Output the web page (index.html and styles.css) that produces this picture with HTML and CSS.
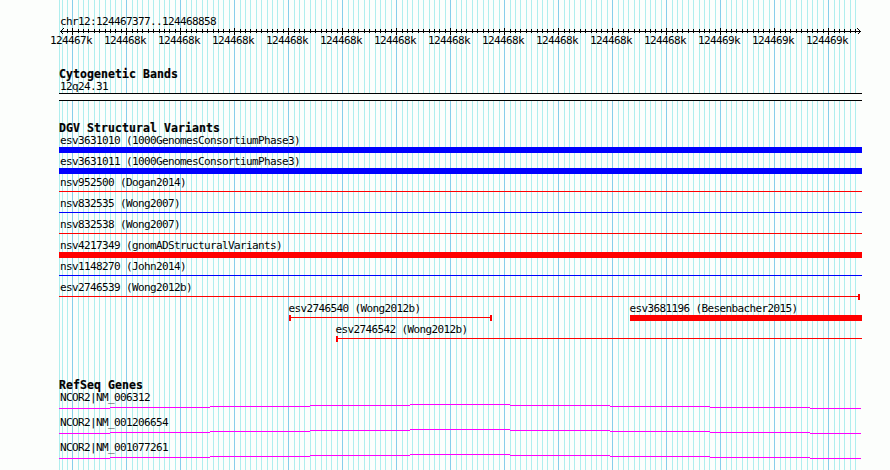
FILE: index.html
```
<!DOCTYPE html>
<html lang="en">
<head>
<meta charset="utf-8">
<title>chr12:124467377..124468858</title>
<link rel="stylesheet" href="styles.css">
</head>
<body>
<main class="browser">
  <svg class="grid" id="grid" width="890" height="470" aria-hidden="true"></svg>
  <header class="ruler">
    <div class="region label">chr12:124467377..124468858</div>
    <svg class="axis" id="axis" width="803" height="10" aria-hidden="true"></svg>
    <div class="ticks label"><span>124467k</span><span>124468k</span><span>124468k</span><span>124468k</span><span>124468k</span><span>124468k</span><span>124468k</span><span>124468k</span><span>124468k</span><span>124468k</span><span>124468k</span><span>124468k</span><span>124469k</span><span>124469k</span><span>124469k</span></div>
  </header>
  <section class="bands">
    <h2>Cytogenetic Bands</h2>
    <div class="label">12q24.31</div>
    <div class="band"></div>
  </section>
  <section class="variants">
    <h2>DGV Structural Variants</h2>
    <div class="row"><div class="label">esv3631010 (1000GenomesConsortiumPhase3)</div><div class="bar blue"></div></div>
    <div class="row"><div class="label">esv3631011 (1000GenomesConsortiumPhase3)</div><div class="bar blue"></div></div>
    <div class="row"><div class="label">nsv952500 (Dogan2014)</div><div class="line red"></div></div>
    <div class="row"><div class="label">nsv832535 (Wong2007)</div><div class="line blue"></div></div>
    <div class="row"><div class="label">nsv832538 (Wong2007)</div><div class="line red"></div></div>
    <div class="row"><div class="label">nsv4217349 (gnomADStructuralVariants)</div><div class="bar red"></div></div>
    <div class="row"><div class="label">nsv1148270 (John2014)</div><div class="line blue"></div></div>
    <div class="row to-859"><div class="label">esv2746539 (Wong2012b)</div><div class="line red cap-end"></div></div>
    <div class="pair">
      <div class="row short"><div class="label">esv2746540 (Wong2012b)</div><div class="line red cap-start cap-end"></div></div>
      <div class="row tail"><div class="label">esv3681196 (Besenbacher2015)</div><div class="bar red"></div></div>
    </div>
    <div class="row inset"><div class="label">esv2746542 (Wong2012b)</div><div class="line red cap-start"></div></div>
  </section>
  <section class="genes">
    <h2>RefSeq Genes</h2>
    <div class="gene"><div class="label">NCOR2|NM_006312</div><svg class="intron" width="802" height="5"><path d="M0 4.5H51M51 3.5H151M151 2.5H251M251 1.5H351M351 .5H451M451 1.5H551M551 2.5H651M651 3.5H751M751 4.5H802"/></svg></div>
    <div class="gene"><div class="label">NCOR2|NM_001206654</div><svg class="intron" width="802" height="5"><path d="M0 4.5H51M51 3.5H151M151 2.5H251M251 1.5H351M351 .5H451M451 1.5H551M551 2.5H651M651 3.5H751M751 4.5H802"/></svg></div>
    <div class="gene"><div class="label">NCOR2|NM_001077261</div><svg class="intron" width="802" height="5"><path d="M0 4.5H51M51 3.5H151M151 2.5H251M251 1.5H351M351 .5H451M451 1.5H551M551 2.5H651M651 3.5H751M751 4.5H802"/></svg></div>
  </section>
</main>
<script src="ruler.js"></script>
</body>
</html>
```
FILE: styles.css
```
* { box-sizing: border-box; }
body { margin: 0; background: #fcfefc; color: #000; }
.browser {
  position: relative;
  width: 890px;
  height: 470px;
  padding: 15px 28px 0 59px;
  overflow: hidden;
  font: 11px/14px "DejaVu Sans Mono", monospace;
  letter-spacing: -0.622px;
}
.grid { position: absolute; left: 0; top: 0; shape-rendering: crispEdges; }
.grid .minor { stroke: #afeeee; }
.grid .major { stroke: #87ceeb; }
.ruler, .bands, .variants, .genes { position: relative; width: 803px; }
.label { height: 12px; padding-left: 1px; white-space: pre; }
.axis { display: block; shape-rendering: crispEdges; stroke: #000; fill: none; }
.ticks { display: flex; margin-left: -9px; padding-left: 0; margin-top: -3px; }
.ticks span { flex: 0 0 54px; }
h2 {
  margin: 0;
  height: 12px;
  font-size: 11.5px;
  line-height: 12px;
  font-weight: bold;
  letter-spacing: 0.077px;
  -webkit-text-stroke: 0.2px #000;
}
.bands { margin-top: 22px; }
.band { height: 8px; margin-top: 1px; border: solid #000; border-width: 1px 0; background: #fcfefc; }
.variants { margin-top: 21px; }
.row { height: 21px; }
.bar { height: 6px; margin-top: 1px; }
.line { position: relative; height: 1px; margin-top: 3px; }
.red { background: #f00; }
.blue { background: #00f; }
.cap-start::before, .cap-end::after {
  content: "";
  position: absolute;
  top: -2px;
  width: 2px;
  height: 6px;
  background: #f00;
}
.cap-start::before { left: 0; }
.cap-end::after { right: 0; }
.to-859 { width: 801px; }
.pair { display: flex; }
.short { width: 203px; margin-left: 230px; }
.short .label, .inset .label { padding-left: 0; margin-left: -0.5px; }
.tail { width: 232px; margin-left: 138px; }
.tail .label { padding-left: 0; margin-left: -0.5px; }
.inset { margin-left: 277px; }
.genes { margin-top: 35px; }
.gene { height: 25px; }
.intron { display: block; position: relative; top: 1px; stroke: #f0f; shape-rendering: crispEdges; }
```
FILE: ruler.js
```
const NS = "http://www.w3.org/2000/svg";
function line(parent, x, y1, y2, cls) {
  const el = document.createElementNS(NS, "path");
  el.setAttribute("d", `M${x + 0.5} ${y1}V${y2}`);
  if (cls) el.setAttribute("class", cls);
  parent.appendChild(el);
}
const grid = document.getElementById("grid");
const axis = document.getElementById("axis");
const steps = [0, 6, 11, 16, 22, 27, 33, 38, 43, 49];
const baseline = document.createElementNS(NS, "path");
baseline.setAttribute("d", "M1 4.5H802M4.5 1.5L1.5 4.5L4.5 7.5M798.5 1.5L801.5 4.5L798.5 7.5");
axis.appendChild(baseline);
line(grid, 59, 0, 470, "minor");
line(grid, 62, 0, 470, "minor");
for (let group = -1; group < 15; group++) {
  steps.forEach((offset, i) => {
    const x = 72 + group * 54 + offset;
    if (x < 63 || x > 856) return;
    line(grid, x, 0, 470, i === 0 ? "major" : "minor");
    line(axis, x - 59, i === 0 ? 1 : 2, i === 0 ? 8 : 6);
  });
}
```
